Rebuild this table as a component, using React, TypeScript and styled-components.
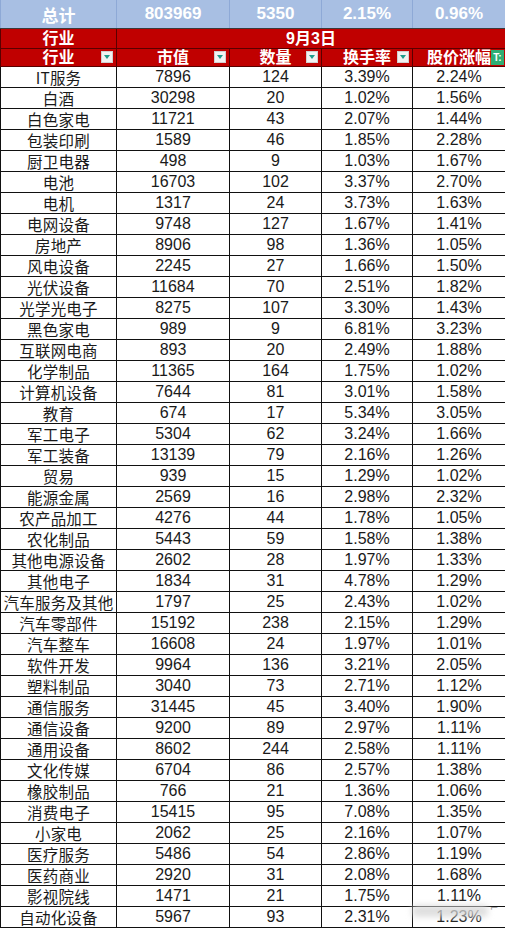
import React from "react";
import styled, { createGlobalStyle } from "styled-components";

const Global = createGlobalStyle`
  html, body { margin: 0; padding: 0; background: #ffffff; }
  body { font-family: "Liberation Sans", "Noto Sans CJK SC", Arial, sans-serif; }
`;

const Page = styled.div`
  width: 505px;
  height: 930px;
  overflow: hidden;
  position: relative;
  background: #ffffff;
`;

const Table = styled.table`
  border-collapse: collapse;
  table-layout: fixed;
  width: 505px;
`;

const SumCell = styled.td`
  height: 28px;
  padding: 0;
  background: #a8bfe3;
  color: #ffffff;
  font-weight: bold;
  font-size: 17px;
  text-align: center;
  border-left: 1px solid #8ea9d6;
  border-right: 1px solid #8ea9d6;
  border-bottom: 1px solid #3a3a3a;
  font-family: "Liberation Sans", "Noto Sans CJK SC", sans-serif;
`;

const RedCell = styled.td<{ $top?: boolean }>`
  height: ${(p) => (p.$top ? "19px" : "17px")};
  padding: 0 4px;
  background: #c00000;
  color: #ffffff;
  font-weight: bold;
  font-size: 16px;
  line-height: 17px;
  text-align: center;
  border: 1px solid #5a0000;
  position: relative;
  font-family: "Liberation Sans", "Noto Sans CJK SC", sans-serif;
`;

const DataCell = styled.td`
  height: 20px;
  padding: 0;
  font-size: 16px;
  line-height: 20px;
  color: #1a1a1a;
  text-align: center;
  border: 1px solid #111111;
  white-space: nowrap;
  font-family: "Liberation Sans", "Noto Sans CJK SC", sans-serif;
`;

const NameCell = styled(DataCell)`
  font-family: "Noto Sans CJK SC", "Liberation Sans", sans-serif;
  font-size: 15.5px;
  letter-spacing: 0.2px;
`;

const FilterBtn = styled.span`
  position: absolute;
  right: 3px;
  top: 2px;
  width: 12px;
  height: 12px;
  background: #f2f2f2;
  border: 1px solid #d0d0d0;
  box-sizing: border-box;
  display: flex;
  align-items: center;
  justify-content: center;
  &::after {
    content: "";
    width: 0;
    height: 0;
    border-left: 3px solid transparent;
    border-right: 3px solid transparent;
    border-top: 4px solid #1f9a8a;
  }
`;

const FilterOn = styled.span`
  position: absolute;
  right: 1px;
  top: 1px;
  width: 13px;
  height: 15px;
  background: #2fae74;
  color: #ffffff;
  font-size: 10px;
  line-height: 15px;
  font-weight: bold;
  text-align: center;
`;

const Watermark = styled.div`
  position: absolute;
  left: 412px;
  top: 905px;
  width: 76px;
  height: 12px;
  background: rgba(215, 215, 215, 0.8);
  border-radius: 4px;
  filter: blur(3px);
`;

const WatermarkMark = styled.span`
  position: absolute;
  left: 490px;
  top: 902px;
  font-size: 10px;
  color: #999999;
  font-family: "DejaVu Sans", sans-serif;
`;

const rows: [string, number, number, string, string][] = [
  ["IT服务", 7896, 124, "3.39%", "2.24%"],
  ["白酒", 30298, 20, "1.02%", "1.56%"],
  ["白色家电", 11721, 43, "2.07%", "1.44%"],
  ["包装印刷", 1589, 46, "1.85%", "2.28%"],
  ["厨卫电器", 498, 9, "1.03%", "1.67%"],
  ["电池", 16703, 102, "3.37%", "2.70%"],
  ["电机", 1317, 24, "3.73%", "1.63%"],
  ["电网设备", 9748, 127, "1.67%", "1.41%"],
  ["房地产", 8906, 98, "1.36%", "1.05%"],
  ["风电设备", 2245, 27, "1.66%", "1.50%"],
  ["光伏设备", 11684, 70, "2.51%", "1.82%"],
  ["光学光电子", 8275, 107, "3.30%", "1.43%"],
  ["黑色家电", 989, 9, "6.81%", "3.23%"],
  ["互联网电商", 893, 20, "2.49%", "1.88%"],
  ["化学制品", 11365, 164, "1.75%", "1.02%"],
  ["计算机设备", 7644, 81, "3.01%", "1.58%"],
  ["教育", 674, 17, "5.34%", "3.05%"],
  ["军工电子", 5304, 62, "3.24%", "1.66%"],
  ["军工装备", 13139, 79, "2.16%", "1.26%"],
  ["贸易", 939, 15, "1.29%", "1.02%"],
  ["能源金属", 2569, 16, "2.98%", "2.32%"],
  ["农产品加工", 4276, 44, "1.78%", "1.05%"],
  ["农化制品", 5443, 59, "1.58%", "1.38%"],
  ["其他电源设备", 2602, 28, "1.97%", "1.33%"],
  ["其他电子", 1834, 31, "4.78%", "1.29%"],
  ["汽车服务及其他", 1797, 25, "2.43%", "1.02%"],
  ["汽车零部件", 15192, 238, "2.15%", "1.29%"],
  ["汽车整车", 16608, 24, "1.97%", "1.01%"],
  ["软件开发", 9964, 136, "3.21%", "2.05%"],
  ["塑料制品", 3040, 73, "2.71%", "1.12%"],
  ["通信服务", 31445, 45, "3.40%", "1.90%"],
  ["通信设备", 9200, 89, "2.97%", "1.11%"],
  ["通用设备", 8602, 244, "2.58%", "1.11%"],
  ["文化传媒", 6704, 86, "2.57%", "1.38%"],
  ["橡胶制品", 766, 21, "1.36%", "1.06%"],
  ["消费电子", 15415, 95, "7.08%", "1.35%"],
  ["小家电", 2062, 25, "2.16%", "1.07%"],
  ["医疗服务", 5486, 54, "2.86%", "1.19%"],
  ["医药商业", 2920, 31, "2.08%", "1.68%"],
  ["影视院线", 1471, 21, "1.75%", "1.11%"],
  ["自动化设备", 5967, 93, "2.31%", "1.23%"],
];

export default function App() {
  return (
    <Page>
      <Global />
      <Table>
        <colgroup>
          <col style={{ width: 116 }} />
          <col style={{ width: 113 }} />
          <col style={{ width: 92 }} />
          <col style={{ width: 91 }} />
          <col style={{ width: 93 }} />
        </colgroup>
        <tbody>
          <tr>
            <SumCell>总计</SumCell>
            <SumCell>803969</SumCell>
            <SumCell>5350</SumCell>
            <SumCell>2.15%</SumCell>
            <SumCell>0.96%</SumCell>
          </tr>
          <tr>
            <RedCell $top>行业</RedCell>
            <RedCell $top colSpan={4}>9月3日</RedCell>
          </tr>
          <tr>
            <RedCell>行业<FilterBtn /></RedCell>
            <RedCell>市值<FilterBtn /></RedCell>
            <RedCell>数量<FilterBtn /></RedCell>
            <RedCell>换手率<FilterBtn /></RedCell>
            <RedCell>股价涨幅<FilterOn>T:</FilterOn></RedCell>
          </tr>
          {rows.map((r) => (
            <tr key={r[0]}>
              <NameCell>{r[0]}</NameCell>
              <DataCell>{r[1]}</DataCell>
              <DataCell>{r[2]}</DataCell>
              <DataCell>{r[3]}</DataCell>
              <DataCell>{r[4]}</DataCell>
            </tr>
          ))}
        </tbody>
      </Table>
      <Watermark />
      <WatermarkMark>⌐</WatermarkMark>
    </Page>
  );
}
